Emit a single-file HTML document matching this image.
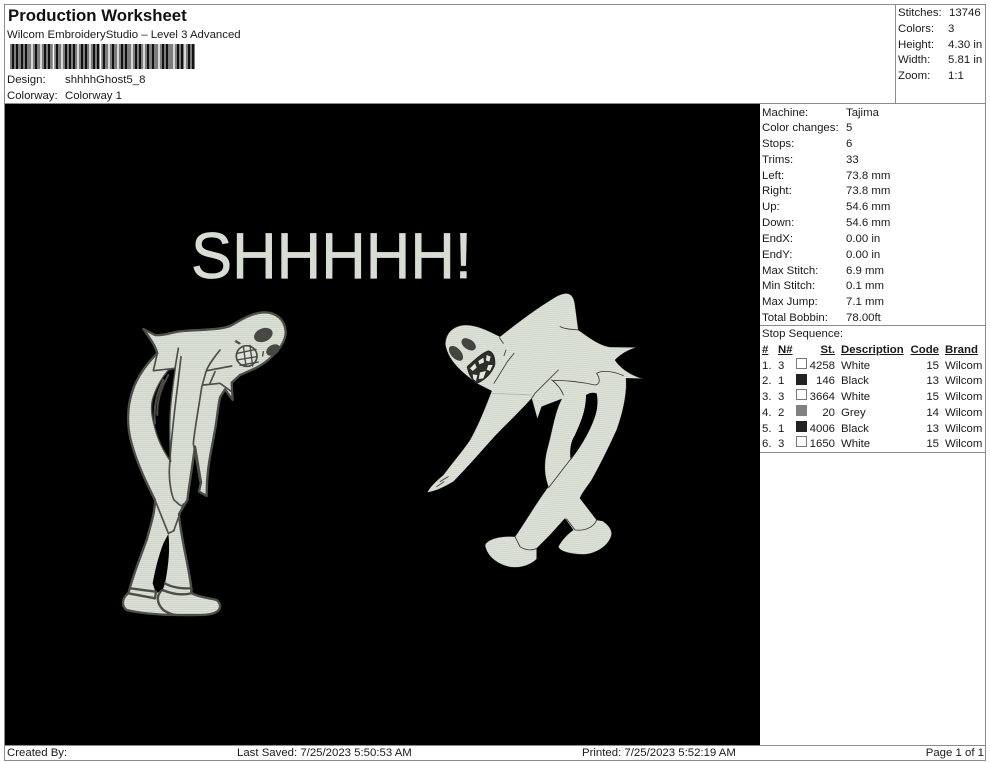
<!DOCTYPE html>
<html><head><meta charset="utf-8"><style>
html,body{margin:0;padding:0;background:#fff}
#p{position:relative;width:990px;height:762px;overflow:hidden;background:#fff;font-family:"Liberation Sans",sans-serif;font-size:11.4px;color:#1a1a1a}
#p span{position:absolute;white-space:nowrap;line-height:14px;margin-top:1px}
#p span.z{margin-top:0}
.l{position:absolute;background:#8c8c8c}
.r{text-align:right}
.u{font-weight:bold;text-decoration:underline}
.s{position:absolute;width:9px;height:9px;border:1px solid #777;background:#fff}
.b{background:#222;border-color:#222}
.g{background:#808080;border-color:#808080}
</style></head><body><div id="p">
<div class="l" style="left:4px;top:4px;width:982px;height:1px"></div>
<div class="l" style="left:4px;top:4px;width:1px;height:757px"></div>
<div class="l" style="left:985px;top:4px;width:1px;height:757px"></div>
<div class="l" style="left:895px;top:4px;width:1px;height:100px"></div>
<div class="l" style="left:4px;top:103px;width:982px;height:1px"></div>
<div class="l" style="left:760px;top:325px;width:226px;height:1px"></div>
<div class="l" style="left:760px;top:452px;width:226px;height:1px"></div>
<div class="l" style="left:4px;top:745px;width:982px;height:1px"></div>
<div class="l" style="left:4px;top:760px;width:982px;height:1px"></div>

<span class="z" style="left:8px;top:6px;font-size:16.8px;font-weight:bold;line-height:19px;color:#111">Production Worksheet</span>
<span style="left:7px;top:27px">Wilcom EmbroideryStudio – Level 3 Advanced</span>
<svg style="position:absolute;left:10px;top:44px" width="186" height="25" fill="none">
<rect x="0" y="0" width="185" height="25" fill="#7d7d7d"/>
<path stroke="#111" stroke-width="2" d="M3 0V25M7 0V25M12 0V25M16 0V25M26 0V25M35 0V25M39 0V25M47 0V25M56 0V25M60 0V25M64 0V25M72 0V25M76 0V25M84 0V25M88 0V25M94 0V25M103 0V25M112 0V25M116 0V25M126 0V25M130 0V25M138 0V25M143 0V25M153 0V25M157 0V25M168 0V25M172 0V25M179 0V25M183 0V25"/>
<path stroke="#fff" stroke-width="1.4" d="M22 0V25M31 0V25M43.5 0V25M52 0V25M68 0V25M80 0V25M90.500 0V25M99 0V25M108 0V25M122 0V25M134 0V25M149 0V25M164 0V25M175 0V25"/>
</svg>
<span style="left:7px;top:72px">Design:</span><span style="left:65px;top:72px">shhhhGhost5_8</span>
<span style="left:7px;top:88px">Colorway:</span><span style="left:65px;top:88px">Colorway 1</span>

<span style="left:898px;top:5px">Stitches:</span><span style="left:949px;top:5px">13746</span>
<span style="left:898px;top:21px">Colors:</span><span style="left:948px;top:21px">3</span>
<span style="left:898px;top:37px">Height:</span><span style="left:948px;top:37px">4.30 in</span>
<span style="left:898px;top:52px">Width:</span><span style="left:948px;top:52px">5.81 in</span>
<span style="left:898px;top:68px">Zoom:</span><span style="left:948px;top:68px">1:1</span>

<svg style="position:absolute;left:5px;top:104px" width="755" height="641" viewBox="5 104 755 641">
<defs>
<pattern id="st" width="8" height="6" patternUnits="userSpaceOnUse"><rect width="8" height="6" fill="#dce2d8"/><rect y="4" width="8" height="2" fill="#c8cec4"/></pattern>
<pattern id="st2" width="8" height="6" patternUnits="userSpaceOnUse" patternTransform="rotate(-4)"><rect width="8" height="6" fill="#dee4da"/><rect y="4" width="8" height="2" fill="#cad0c6"/></pattern>
</defs>
<rect x="5" y="104" width="755" height="641" fill="#000"/>
<text x="191" y="278" font-family="Liberation Sans" font-size="64.500" fill="#d8ddd3" stroke="#d8ddd3" stroke-width=".7" textLength="281" lengthAdjust="spacingAndGlyphs">SHHHHH!</text>

<g transform="translate(100,300) scale(.33333)" stroke-linejoin="round" stroke-linecap="round" fill="none">
<path fill="url(#st)" stroke="#4d4d49" stroke-width="7" d="M130 87L165 105C190 108 210 98 240 94C290 88 350 92 390 78C420 62 450 40 490 37C530 36 555 60 557 95C558 125 535 150 515 170C485 200 450 212 420 225L395 248L398 300L375 268L360 292C352 330 350 370 343 400C335 450 320 500 320 588L297 575L303 547L285 440C278 490 270 540 262 600L237 642C240 700 262 780 272 850L275 880C300 892 330 895 350 900C362 910 365 925 350 935C335 948 290 945 230 945C170 945 110 938 80 930C60 915 70 890 85 880L90 862C105 810 125 760 140 720C150 680 165 640 165 600C140 550 110 490 92 420C80 370 80 320 100 265C115 225 145 185 172 160C165 135 150 115 130 87Z"/>
<path fill="#000" stroke="#4d4d49" stroke-width="4" d="M205 210L226 205C220 250 212 300 210 350C208 400 210 450 212 485C195 460 175 425 165 385C155 350 150 320 160 290C170 260 188 230 205 210Z"/>
<path fill="#000" d="M205 702C210 740 207 790 195 850L188 870L168 880L158 850C165 810 175 770 190 730Z"/>
<g stroke="#4d4d49" stroke-width="5">
<path d="M235 145L225 205L160 212L172 160M243 170L235 240C225 320 212 420 208 510C207 550 215 585 222 600C235 610 245 625 250 612L222 690"/>
<path d="M360 150C340 175 325 195 318 215L305 262C295 330 285 380 280 430L300 545M320 212L395 198M310 255L360 250L395 275M345 215L330 250"/>
<path d="M165 600L205 700L222 692" />
<path stroke-width="7" d="M90 865L168 875L165 895L85 880M195 850C215 862 245 866 275 865L273 880C245 886 215 882 188 870C172 880 165 905 190 930C205 940 215 944 230 945"/>
<path d="M405 125L418 132" stroke-width="3"/>
<path d="M205 225C185 260 170 300 172 345M190 240C170 280 160 320 165 370" stroke-width="6"/>
</g>
<ellipse cx="490" cy="105" rx="29" ry="20" transform="rotate(-22 490 105)" fill="#484844"/>
<ellipse cx="519" cy="150" rx="22" ry="15" transform="rotate(-32 519 150)" fill="#484844"/>
<circle cx="440" cy="168" r="31" fill="#dbe1d7" stroke="#484844" stroke-width="5"/>
<path stroke="#484844" stroke-width="4" d="M412 160L468 148M410 180L470 170M420 196L475 186M430 138L438 198M450 136L458 198"/>
<path stroke="#484844" stroke-width="4" d="M408 122L420 130M490 155L488 168"/>
</g>

<g transform="translate(420,285) scale(.33333)" stroke-linejoin="round" stroke-linecap="round" fill="none">
<path fill="url(#st2)" stroke="#222" stroke-width="1.5" d="M440 25C455 27 462 38 465 60L475 135C510 160 540 182 570 186L650 187C625 195 605 205 585 225C600 250 635 272 668 281L618 280C622 320 610 380 590 435C565 490 540 540 515 585C498 610 485 625 480 640L530 705L548 708C565 720 578 735 574 752C565 785 520 812 480 808C450 806 420 800 415 785C425 765 445 745 460 735L435 700L390 750L350 790L350 822C330 842 295 852 265 845C235 838 200 815 195 780C205 760 245 752 285 755C310 720 345 660 385 605C372 570 370 530 385 480C398 430 405 380 425 342L365 365L352 402L335 340C290 390 240 435 210 470C170 515 130 560 100 590C75 605 45 620 22 622C28 610 40 595 70 570C100 530 130 495 150 465C175 420 195 370 215 318L170 295C130 265 85 230 76 180C75 145 100 122 135 120C170 120 200 135 240 155C290 115 350 70 400 40C415 30 430 25 440 25Z"/>
<path fill="#000" d="M498 330C510 322 520 322 530 325C535 350 532 375 525 395C510 440 480 490 452 525C448 495 452 470 465 450C478 420 498 380 498 330Z"/>
<g stroke="#333" stroke-width="2.5">
<path d="M420 125C440 135 458 132 475 135M238 158L250 175M282 205L262 230L222 295M258 195L252 212"/>
<path d="M415 255L345 325L335 340M395 285C410 295 425 315 430 330M400 287C430 285 480 290 525 300C542 298 540 280 530 265C545 255 580 258 610 272"/>
<path d="M460 512L386 608M530 705C520 730 490 738 465 735L440 702M285 755L300 785C315 795 335 798 350 790M60 590L85 575M50 605L72 590"/>
</g>
<path d="M215 325L335 330" stroke="#aab0a5" stroke-width="2"/>
<ellipse cx="146" cy="178" rx="24" ry="15" transform="rotate(35 146 178)" fill="#444440"/>
<ellipse cx="108" cy="205" rx="27" ry="15" transform="rotate(48 108 205)" fill="#444440"/>
<path fill="#2e2e2b" stroke="#222" stroke-width="3" d="M142 245C165 225 185 205 205 198C220 200 226 220 224 240C215 265 195 285 170 295C155 285 145 265 142 245Z"/>
<path fill="#e3e8de" d="M150 250L165 235L170 248L158 258ZM175 228L190 218L192 232L178 238ZM200 210L212 215L208 230L198 226ZM205 240L218 240L210 258L200 254ZM180 262L198 258L190 280L176 282ZM158 268L172 270L168 288L160 282Z"/>
</g>
</svg>

<span style="left:762px;top:105px">Machine:</span><span style="left:846px;top:105px">Tajima</span>
<span style="left:762px;top:120px">Color changes:</span><span style="left:846px;top:120px">5</span>
<span style="left:762px;top:136px">Stops:</span><span style="left:846px;top:136px">6</span>
<span style="left:762px;top:152px">Trims:</span><span style="left:846px;top:152px">33</span>
<span style="left:762px;top:168px">Left:</span><span style="left:846px;top:168px">73.8 mm</span>
<span style="left:762px;top:183px">Right:</span><span style="left:846px;top:183px">73.8 mm</span>
<span style="left:762px;top:199px">Up:</span><span style="left:846px;top:199px">54.6 mm</span>
<span style="left:762px;top:215px">Down:</span><span style="left:846px;top:215px">54.6 mm</span>
<span style="left:762px;top:231px">EndX:</span><span style="left:846px;top:231px">0.00 in</span>
<span style="left:762px;top:247px">EndY:</span><span style="left:846px;top:247px">0.00 in</span>
<span style="left:762px;top:263px">Max Stitch:</span><span style="left:846px;top:263px">6.9 mm</span>
<span style="left:762px;top:278px">Min Stitch:</span><span style="left:846px;top:278px">0.1 mm</span>
<span style="left:762px;top:294px">Max Jump:</span><span style="left:846px;top:294px">7.1 mm</span>
<span style="left:762px;top:310px">Total Bobbin:</span><span style="left:846px;top:310px">78.00ft</span>
<span style="left:762px;top:326px">Stop Sequence:</span>

<span class="u" style="left:762px;top:342px">#</span><span class="u" style="left:778px;top:342px">N#</span>
<span class="u r" style="right:155px;top:342px">St.</span><span class="u" style="left:841px;top:342px">Description</span>
<span class="u r" style="right:51px;top:342px">Code</span><span class="u" style="left:945px;top:342px">Brand</span>

<span style="left:762px;top:358px">1.</span><span style="left:778px;top:358px">3</span><div class="s" style="left:796px;top:358px"></div><span class="r" style="right:155px;top:358px">4258</span><span style="left:841px;top:358px">White</span><span class="r" style="right:51px;top:358px">15</span><span style="left:945px;top:358px">Wilcom</span>
<span style="left:762px;top:373px">2.</span><span style="left:778px;top:373px">1</span><div class="s b" style="left:796px;top:374px"></div><span class="r" style="right:155px;top:373px">146</span><span style="left:841px;top:373px">Black</span><span class="r" style="right:51px;top:373px">13</span><span style="left:945px;top:373px">Wilcom</span>
<span style="left:762px;top:389px">3.</span><span style="left:778px;top:389px">3</span><div class="s" style="left:796px;top:389px"></div><span class="r" style="right:155px;top:389px">3664</span><span style="left:841px;top:389px">White</span><span class="r" style="right:51px;top:389px">15</span><span style="left:945px;top:389px">Wilcom</span>
<span style="left:762px;top:405px">4.</span><span style="left:778px;top:405px">2</span><div class="s g" style="left:796px;top:405px"></div><span class="r" style="right:155px;top:405px">20</span><span style="left:841px;top:405px">Grey</span><span class="r" style="right:51px;top:405px">14</span><span style="left:945px;top:405px">Wilcom</span>
<span style="left:762px;top:421px">5.</span><span style="left:778px;top:421px">1</span><div class="s b" style="left:796px;top:421px"></div><span class="r" style="right:155px;top:421px">4006</span><span style="left:841px;top:421px">Black</span><span class="r" style="right:51px;top:421px">13</span><span style="left:945px;top:421px">Wilcom</span>
<span style="left:762px;top:436px">6.</span><span style="left:778px;top:436px">3</span><div class="s" style="left:796px;top:436px"></div><span class="r" style="right:155px;top:436px">1650</span><span style="left:841px;top:436px">White</span><span class="r" style="right:51px;top:436px">15</span><span style="left:945px;top:436px">Wilcom</span>

<span class="z" style="left:7px;top:746px">Created By:</span>
<span class="z" style="left:237px;top:746px">Last Saved: 7/25/2023 5:50:53 AM</span>
<span class="z" style="left:582px;top:746px">Printed: 7/25/2023 5:52:19 AM</span>
<span class="z r" style="right:6px;top:746px">Page 1 of 1</span>
</div></body></html>
